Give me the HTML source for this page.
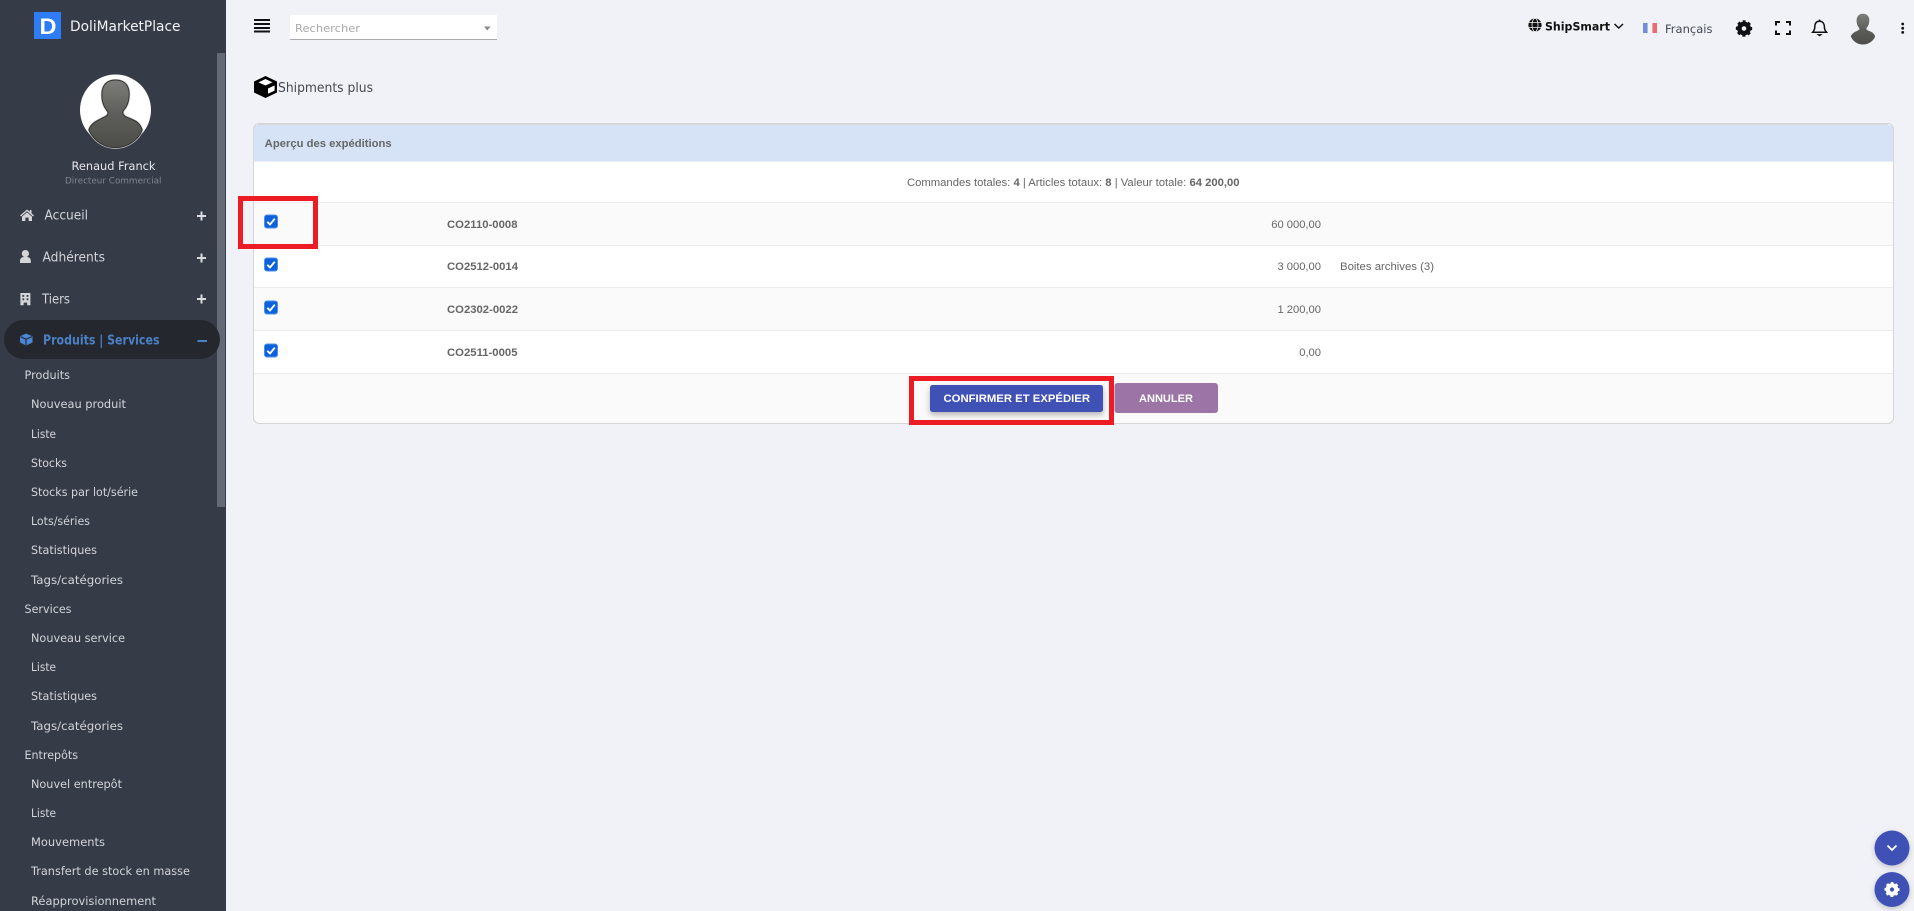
<!DOCTYPE html>
<html lang="fr"><head><meta charset="utf-8"><title>Shipments plus</title>
<style>
html,body{margin:0;padding:0;width:1914px;height:911px;overflow:hidden;background:#f0f2f8}
svg{display:block}
text{white-space:pre}
.p{font-family:"DejaVu Sans",sans-serif}
.a{font-family:"Liberation Sans",Arial,sans-serif}
.m{font-size:13px;fill:#d3d5d9}
.s{font-size:11.5px;fill:#d3d5d9}
.t{font-size:11.2px;fill:#666}
.b{font-weight:bold}
</style></head><body>
<svg xmlns="http://www.w3.org/2000/svg" width="1914" height="911" viewBox="0 0 1914 911">
<defs>
<filter id="sh" x="-30%" y="-50%" width="160%" height="220%"><feDropShadow dx="0" dy="3" stdDeviation="3" flood-color="#000" flood-opacity=".28"/></filter>
<filter id="sh2" x="-50%" y="-50%" width="200%" height="200%"><feDropShadow dx="0" dy="2" stdDeviation="3" flood-color="#000" flood-opacity=".2"/></filter>
<linearGradient id="sil" x1="0" y1="0" x2="0" y2="1"><stop offset="0" stop-color="#7d7d7a"/><stop offset=".5" stop-color="#5e5e5a"/><stop offset="1" stop-color="#4c4c48"/></linearGradient>
<path id="silh" d="M135 45C165 45 177 65 176 90C175 110 170 125 160 135C155 142 155 150 170 157C190 165 208 170 215 195C205 225 170 248 135 248C100 248 70 228 55 195C62 172 85 165 100 157C115 150 115 142 108 135C98 122 94 108 94 90C94 65 105 45 135 45Z"/>
<g id="cb"><rect x=".5" y=".5" width="13" height="13" rx="2.5" fill="#0b62dc" stroke="#4f8fe8"/><path d="M3.3 7.3L6 10L10.8 4.2" fill="none" stroke="#fff" stroke-width="1.9"/></g>
</defs>

<!-- page -->
<rect width="1914" height="911" fill="#f0f2f8"/>

<!-- sidebar -->
<rect width="226" height="911" fill="#353b47"/>
<rect x="217" y="53" width="8" height="454" fill="#636a75"/>
<rect x="34" y="12" width="27" height="27" fill="#2f7df6"/>
<text class="a b" x="39.5" y="34" font-size="22.5" fill="#fff" textLength="17" lengthAdjust="spacingAndGlyphs">D</text>
<text class="p" x="70" y="31" font-size="14" fill="#f2f3f5" textLength="110.5" lengthAdjust="spacingAndGlyphs">DoliMarketPlace</text>

<circle cx="115.5" cy="110" r="35.5" fill="#fff"/>
<g transform="translate(70.5 65) scale(.3333)">
<use href="#silh" fill="url(#sil)" stroke="#cfcfcf" stroke-width="7"/>
<use href="#silh" fill="url(#sil)" stroke="#33332f" stroke-width="3"/>
</g>
<text class="p" x="71.5" y="170" font-size="11.5" fill="#e6e7ea" textLength="84" lengthAdjust="spacingAndGlyphs">Renaud Franck</text>
<text class="p" x="65" y="183.5" font-size="8.8" fill="#80868f" textLength="96.5" lengthAdjust="spacingAndGlyphs">Directeur Commercial</text>

<!-- menu icons -->
<g fill="#d3d5d9">
<path d="M27 209.5L20 215.5L21 216.5L27 211.3L33 216.5L34 215.5L31.5 213.3V210H29.8V211.8Z"/>
<path d="M22 216.6L27 212.4L32 216.6V221H28.6V217.6H25.4V221H22Z"/>
<circle cx="25.4" cy="253.6" r="3.6"/>
<path d="M20 263V260.8C20 258.5 21.7 257 24 257H27C29.2 257 30.8 258.5 30.8 260.8V263Z"/>
<path d="M20.4 293H30.4V305.2H27.2V302.6H23.6V305.2H20.4Z"/>
</g>
<g fill="#353b47"><rect x="22.4" y="295" width="1.8" height="1.8"/><rect x="26.6" y="295" width="1.8" height="1.8"/><rect x="22.4" y="298.4" width="1.8" height="1.8"/><rect x="26.6" y="298.4" width="1.8" height="1.8"/></g>

<text class="p m" x="44.5" y="219.5" textLength="43.5" lengthAdjust="spacingAndGlyphs">Accueil</text>
<text class="p m" x="42.5" y="261.5" textLength="62.5" lengthAdjust="spacingAndGlyphs">Adhérents</text>
<text class="p m" x="42" y="303.5" textLength="28" lengthAdjust="spacingAndGlyphs">Tiers</text>
<g fill="#d9dbde">
<rect x="197" y="215" width="9" height="2"/><rect x="200.5" y="211.5" width="2" height="9"/>
<rect x="197" y="257" width="9" height="2"/><rect x="200.5" y="253.5" width="2" height="9"/>
<rect x="197" y="298" width="9" height="2"/><rect x="200.5" y="294.5" width="2" height="9"/>
</g>

<rect x="4" y="320" width="216" height="39" rx="19.5" fill="#24272e"/>
<path d="M26 333.5L32.5 336.3V342.5L26 345.5L20 342.5V336.3Z" fill="#4a86d4"/>
<path d="M20.5 336.6L26 339.2L32 336.6M26 339.2V345" fill="none" stroke="#24272e" stroke-width="1.1"/>
<text class="p" x="43" y="344.5" font-size="13" font-weight="bold" fill="#4c80c4" textLength="116.5" lengthAdjust="spacingAndGlyphs">Produits | Services</text>
<rect x="197.5" y="340" width="9.5" height="2" fill="#4c80c4"/>

<!-- submenu -->
<g class="p">
<text class="s" x="24.5" y="379" textLength="45.5" lengthAdjust="spacingAndGlyphs">Produits</text>
<text class="s" x="31" y="408" textLength="95" lengthAdjust="spacingAndGlyphs">Nouveau produit</text>
<text class="s" x="31" y="438" textLength="25" lengthAdjust="spacingAndGlyphs">Liste</text>
<text class="s" x="31" y="467" textLength="36" lengthAdjust="spacingAndGlyphs">Stocks</text>
<text class="s" x="31" y="496" textLength="107" lengthAdjust="spacingAndGlyphs">Stocks par lot/série</text>
<text class="s" x="31" y="525" textLength="59" lengthAdjust="spacingAndGlyphs">Lots/séries</text>
<text class="s" x="31" y="554" textLength="66" lengthAdjust="spacingAndGlyphs">Statistiques</text>
<text class="s" x="31" y="584" textLength="92" lengthAdjust="spacingAndGlyphs">Tags/catégories</text>
<text class="s" x="24.5" y="613" textLength="47" lengthAdjust="spacingAndGlyphs">Services</text>
<text class="s" x="31" y="642" textLength="94" lengthAdjust="spacingAndGlyphs">Nouveau service</text>
<text class="s" x="31" y="671" textLength="25" lengthAdjust="spacingAndGlyphs">Liste</text>
<text class="s" x="31" y="700" textLength="66" lengthAdjust="spacingAndGlyphs">Statistiques</text>
<text class="s" x="31" y="730" textLength="92" lengthAdjust="spacingAndGlyphs">Tags/catégories</text>
<text class="s" x="24.5" y="759" textLength="53.5" lengthAdjust="spacingAndGlyphs">Entrepôts</text>
<text class="s" x="31" y="788" textLength="91" lengthAdjust="spacingAndGlyphs">Nouvel entrepôt</text>
<text class="s" x="31" y="817" textLength="25" lengthAdjust="spacingAndGlyphs">Liste</text>
<text class="s" x="31" y="846" textLength="74" lengthAdjust="spacingAndGlyphs">Mouvements</text>
<text class="s" x="31" y="875" textLength="159" lengthAdjust="spacingAndGlyphs">Transfert de stock en masse</text>
<text class="s" x="31" y="905" textLength="125" lengthAdjust="spacingAndGlyphs">Réapprovisionnement</text>
</g>

<!-- topbar -->
<g fill="#111"><rect x="254" y="19" width="16" height="2"/><rect x="254" y="23" width="16" height="2"/><rect x="254" y="27" width="16" height="2"/><rect x="254" y="30.5" width="16" height="2"/></g>
<rect x="290" y="15" width="207" height="24" fill="#fff"/>
<rect x="290" y="39" width="207" height="1" fill="#a9abb0"/>
<text class="p" x="295" y="32" font-size="11" fill="#a8a8a8" textLength="65" lengthAdjust="spacingAndGlyphs">Rechercher</text>
<path d="M484 26.5H490.5L487.2 30.5Z" fill="#888"/>

<circle cx="1535" cy="25" r="6.6" fill="#111"/>
<g fill="none" stroke="#f0f2f8" stroke-width=".8"><ellipse cx="1535" cy="25" rx="3" ry="6.6"/><path d="M1528.5 22.5H1541.5M1528.5 27.5H1541.5"/></g>
<text class="p" x="1545" y="30.5" font-size="11.5" font-weight="bold" fill="#111" textLength="65" lengthAdjust="spacingAndGlyphs">ShipSmart</text>
<path d="M1614.5 24L1618.7 28L1623 24" fill="none" stroke="#111" stroke-width="1.5"/>
<rect x="1643" y="23" width="4.7" height="10" fill="#6f90d8"/><rect x="1647.7" y="23" width="4.7" height="10" fill="#f5f5f7"/><rect x="1652.4" y="23" width="4.6" height="10" fill="#ec6a72"/>
<text class="p" x="1665" y="33" font-size="11.5" fill="#444a55" textLength="47.5" lengthAdjust="spacingAndGlyphs">Français</text>

<!-- gear -->
<g fill="none" stroke="#0e1116">
<circle cx="1744" cy="28.5" r="4.6" stroke-width="4.6"/>
<circle cx="1744" cy="28.5" r="6.8" stroke-width="2.8" stroke-dasharray="3 2.34" stroke-dashoffset="1.5" transform="rotate(-90 1744 28.5)"/>
</g>
<!-- fullscreen -->
<path d="M1776 25.5V22H1780M1786 22H1790V25.5M1790 30.5V34H1786M1780 34H1776V30.5" fill="none" stroke="#111" stroke-width="2"/>
<!-- bell -->
<path d="M1819.5 21.3C1823 21.3 1824.4 24 1824.4 27C1824.4 30 1825.5 31 1826.5 32.2H1812.7C1813.7 31 1814.8 30 1814.8 27C1814.8 24 1816 21.3 1819.5 21.3Z" fill="none" stroke="#111" stroke-width="1.5"/>
<rect x="1818.7" y="19.6" width="1.7" height="2" fill="#111"/>
<path d="M1817.5 34.5H1821.7L1819.6 36Z" fill="#111" stroke="#111" stroke-width=".7"/>
<!-- avatar -->
<g transform="translate(1842.7 7.2) scale(.15)"><use href="#silh" fill="url(#sil)" stroke="#55555a" stroke-width="2"/></g>
<!-- dots -->
<g fill="#111"><circle cx="1902.7" cy="24" r="1.4"/><circle cx="1902.7" cy="28.2" r="1.4"/><circle cx="1902.7" cy="32.4" r="1.4"/></g>

<!-- title -->
<path d="M265.5 76L277 81.5V92.5L265.5 98L254 92.5V81.5Z" fill="#000"/>
<path d="M265.5 79L272.5 82.4L265.5 85.5L258.5 82.4Z" fill="#fff"/>
<path d="M268 88.5L274.6 85.4V90.6L268 93.8Z" fill="#fff"/>
<text class="p" x="278" y="92" font-size="13" fill="#44494f" textLength="95" lengthAdjust="spacingAndGlyphs">Shipments plus</text>

<!-- card -->
<rect x="253.5" y="123.5" width="1640" height="300" rx="6" fill="#fff" stroke="#d6d6da"/>
<path d="M254 161V129Q254 125 259 125H1888Q1893 125 1893 129V161Z" fill="#d6e3f6"/>
<rect x="258" y="123" width="1630" height="2" fill="#d8d8dc"/>
<text class="a" x="264.7" y="147" font-size="11" font-weight="bold" fill="#666" textLength="127" lengthAdjust="spacingAndGlyphs">Aperçu des expéditions</text>
<rect x="254" y="161" width="1639" height="1" fill="#e9edf3"/>
<rect x="254" y="202" width="1639" height="43" fill="#fafafa"/>
<rect x="254" y="287" width="1639" height="43" fill="#fafafa"/>
<path d="M254 373H1893V418Q1893 423 1888 423H259Q254 423 254 418Z" fill="#fafafa"/>
<g fill="#ebebeb"><rect x="254" y="202" width="1639" height="1"/><rect x="254" y="245" width="1639" height="1"/><rect x="254" y="287" width="1639" height="1"/><rect x="254" y="330" width="1639" height="1"/><rect x="254" y="373" width="1639" height="1"/></g>
<rect x="253.5" y="123.5" width="1640" height="300" rx="6" fill="none" stroke="#d6d6da"/>

<text class="a" y="186" font-size="11.28" fill="#666"><tspan x="907">Commandes totales: </tspan><tspan font-weight="bold">4</tspan><tspan> | Articles totaux: </tspan><tspan font-weight="bold">8</tspan><tspan> | Valeur totale: </tspan><tspan font-weight="bold">64 200,00</tspan></text>

<use href="#cb" x="264" y="214.5"/><use href="#cb" x="264" y="257.5"/><use href="#cb" x="264" y="300.5"/><use href="#cb" x="264" y="343.5"/>

<g class="a">
<text class="t" x="447" y="228" font-weight="bold" textLength="70.5" lengthAdjust="spacingAndGlyphs">CO2110-0008</text>
<text class="t" x="447" y="270" font-weight="bold" textLength="71" lengthAdjust="spacingAndGlyphs">CO2512-0014</text>
<text class="t" x="447" y="313" font-weight="bold" textLength="71" lengthAdjust="spacingAndGlyphs">CO2302-0022</text>
<text class="t" x="447" y="356" font-weight="bold" textLength="70.5" lengthAdjust="spacingAndGlyphs">CO2511-0005</text>
</g>
<g class="a" text-anchor="end">
<text class="t" x="1321" y="228">60 000,00</text>
<text class="t" x="1321" y="270">3 000,00</text>
<text class="t" x="1321" y="313">1 200,00</text>
<text class="t" x="1321" y="356">0,00</text>
</g>
<text class="a t" x="1340" y="270" textLength="94" lengthAdjust="spacingAndGlyphs">Boites archives (3)</text>

<!-- buttons -->
<rect x="930" y="385" width="173" height="27" rx="2.5" fill="#3f51b5" filter="url(#sh)"/>
<text class="a" x="943.5" y="402" font-size="11" font-weight="bold" fill="#fff" textLength="146.5" lengthAdjust="spacingAndGlyphs">CONFIRMER ET EXPÉDIER</text>
<rect x="1114.5" y="383" width="103.5" height="30" rx="3" fill="#9c74a6"/>
<text class="a" x="1139" y="402" font-size="11" font-weight="bold" fill="#fff" textLength="54" lengthAdjust="spacingAndGlyphs">ANNULER</text>

<!-- annotation boxes -->
<rect x="240.5" y="198.5" width="75" height="48" fill="none" stroke="#ed1c24" stroke-width="5"/>
<rect x="911.5" y="378.5" width="200" height="44" fill="none" stroke="#ed1c24" stroke-width="5"/>

<!-- floating buttons -->
<circle cx="1892" cy="848" r="17.5" fill="#3f51b5" filter="url(#sh2)"/>
<path d="M1887.5 845.5L1892 850L1896.5 845.5" fill="none" stroke="#fff" stroke-width="1.8"/>
<circle cx="1892" cy="889.5" r="17.5" fill="#3f51b5" filter="url(#sh2)"/>
<g fill="none" stroke="#fff">
<circle cx="1892" cy="889.5" r="4.2" stroke-width="4.2"/>
<circle cx="1892" cy="889.5" r="6.2" stroke-width="2.6" stroke-dasharray="2.7 2.17" stroke-dashoffset="1.35" transform="rotate(-90 1892 889.5)"/>
</g>
</svg>
</body></html>
